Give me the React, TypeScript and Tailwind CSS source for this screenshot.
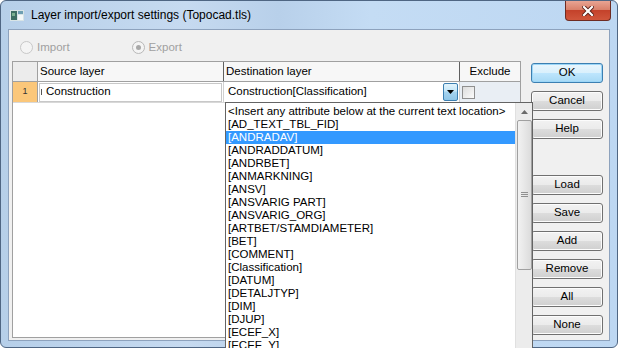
import React from "react";

const items = [
  "<Insert any attribute below at the current text location>",
  "[AD_TEXT_TBL_FID]",
  "[ANDRADAV]",
  "[ANDRADDATUM]",
  "[ANDRBET]",
  "[ANMARKNING]",
  "[ANSV]",
  "[ANSVARIG PART]",
  "[ANSVARIG_ORG]",
  "[ARTBET/STAMDIAMETER]",
  "[BET]",
  "[COMMENT]",
  "[Classification]",
  "[DATUM]",
  "[DETALJTYP]",
  "[DIM]",
  "[DJUP]",
  "[ECEF_X]",
  "[ECEF_Y]",
];

const leftButtons1 = ["OK", "Cancel", "Help"];
const leftButtons2 = ["Load", "Save", "Add", "Remove", "All", "None"];

function Btn({ label, primary }: { label: string; primary?: boolean }) {
  return (
    <div
      className={
        "h-[20px] w-[72px] rounded-[3px] border flex items-center justify-center text-[11.5px] text-black " +
        (primary
          ? "border-[#3c7fb1] bg-[linear-gradient(#eaf6fd_0%,#d9f0fc_50%,#bee6fd_50%,#a7d9f5_100%)] shadow-[inset_0_0_0_1px_#9cd6f7]"
          : "border-[#707070] bg-[linear-gradient(#f2f2f2_0%,#ebebeb_50%,#dddddd_50%,#cfcfcf_100%)] shadow-[inset_0_0_0_1px_#fcfcfc]")
      }
    >
      {label}
    </div>
  );
}

export default function App() {
  return (
    <div
      className="relative w-[618px] h-[348px] overflow-hidden bg-white"
      style={{ fontFamily: '"Liberation Sans", Arial, sans-serif' }}
    >
      <div className="w-[618px] h-[348px] rounded-t-[6px] rounded-b-[6px] border border-[#4f6683] bg-[linear-gradient(90deg,#b6cfe9_0%,#c6daf0_30%,#b8d0ea_45%,#c4dcf4_60%,#bdd7f2_100%)] flex flex-col">
        {/* Title bar */}
        <div className="h-[28px] flex items-start shrink-0">
          <div className="ml-[9px] mt-[9px] w-[14px] h-[11px]">
            <svg width="14" height="11" viewBox="0 0 14 11">
              <rect x="0" y="0" width="14" height="11" fill="#d8e4e6" />
              <rect x="1" y="1" width="6" height="9" fill="#3d6f63" />
              <rect x="8" y="1" width="5" height="3" fill="#6e9fb2" />
              <rect x="8" y="5" width="5" height="5" fill="#f4f8f8" />
              <rect x="2" y="3" width="3" height="3" fill="#7bb18f" />
            </svg>
          </div>
          <div className="ml-[7px] mt-[6px] text-[12px] leading-[16px] text-black">
            Layer import/export settings (Topocad.tls)
          </div>
          <div className="flex-1" />
          <div className="mr-[6px] w-[46px] h-[20px] rounded-b-[4px] border border-[#6e2b22] border-t-0 bg-[linear-gradient(#e8a493_0%,#d9816b_45%,#c4422b_50%,#d0563c_100%)] flex items-center justify-center">
            <svg width="12" height="10" viewBox="0 0 12 10">
              <path d="M2 1 L10 9 M10 1 L2 9" stroke="#5a1f18" strokeWidth="4" strokeLinecap="square" />
              <path d="M2 1 L10 9 M10 1 L2 9" stroke="#ffffff" strokeWidth="2.2" strokeLinecap="square" />
            </svg>
          </div>
        </div>

        {/* Client */}
        <div className="flex-1 mx-[7px] mb-[6px] border border-[#8da2bd] bg-[#f0f0f0] flex">
          <div className="flex flex-col ml-[3px] w-[509px]">
            {/* radio row */}
            <div className="h-[31px] pt-[4px] flex items-center text-[11.5px] text-[#a0a0a0]">
              <div className="ml-[8px] flex items-center">
                <div className="w-[13px] h-[13px] rounded-full border border-[#c8c8c8] bg-[#f4f4f4]" />
                <span className="ml-[4px]">Import</span>
              </div>
              <div className="ml-[62px] flex items-center">
                <div className="w-[13px] h-[13px] rounded-full border border-[#b8b8b8] bg-[#f4f4f4] flex items-center justify-center">
                  <div className="w-[5px] h-[5px] rounded-full bg-[#a8a8a8]" />
                </div>
                <span className="ml-[4px]">Export</span>
              </div>
            </div>

            {/* grid */}
            <div className="flex-1 mb-[2px] border border-[#a0a0a0] bg-white flex flex-col text-[11.5px] text-black">
              <div className="h-[20px] flex border-b border-[#a0a0a0] bg-[#f7f7f7]">
                <div className="w-[25px] bg-[#ececec] border-r border-[#a0a0a0]" />
                <div className="w-[186px] border-r border-[#606060] pl-[2px] flex items-center">Source layer</div>
                <div className="w-[236px] border-r border-[#606060] pl-[2px] flex items-center">Destination layer</div>
                <div className="flex-1 flex items-center justify-center">Exclude</div>
              </div>
              <div className="h-[21px] flex border-b border-[#d8d8d8]">
                <div className="w-[25px] bg-[#fbc77a] border-r border-[#a0a0a0] flex items-center justify-center text-[9px] text-[#333]">
                  1
                </div>
                <div className="w-[186px] border-r border-[#d0d0d0] flex items-center">
                  <div className="ml-[1px] w-[183px] h-[19px] border border-[#c8c8c8] bg-white flex items-center">
                    <span className="ml-[1px] w-[1px] h-[6px] bg-[#555]" />
                    <span className="ml-[4px]">Construction</span>
                  </div>
                </div>
                <div className="w-[236px] border-r border-[#d0d0d0] flex items-center bg-white">
                  <span className="ml-[4px] flex-1">Construction[Classification]</span>
                  <div className="mr-[1px] w-[15px] h-[18px] rounded-[2px] border border-[#3c7fb1] bg-[linear-gradient(#e3f4fc_0%,#c4e6f8_45%,#a5d3ef_50%,#8fc6e8_100%)] flex items-center justify-center">
                    <svg width="7" height="4" viewBox="0 0 7 4">
                      <path d="M0 0 L7 0 L3.5 4 Z" fill="#000" />
                    </svg>
                  </div>
                </div>
                <div className="flex-1 bg-[#e9eef4] flex items-center">
                  <div className="ml-[2px] w-[13px] h-[13px] border border-[#8f8f8f] bg-[linear-gradient(135deg,#dcdcdc,#fbfbfb)]" />
                </div>
              </div>
            </div>
          </div>

          {/* buttons */}
          <div className="ml-[10px] mt-[33px] flex flex-col gap-[8px]">
            {leftButtons1.map((b, i) => (
              <Btn key={b} label={b} primary={i === 0} />
            ))}
            <div className="h-[20px]" />
            {leftButtons2.map((b) => (
              <Btn key={b} label={b} />
            ))}
          </div>
        </div>
      </div>

      {/* dropdown list overlay */}
      <div className="absolute left-[225px] top-[102px] w-[308px] h-[250px] border border-[#646464] bg-white flex text-[11.5px] text-black">
        <div className="flex-1 pt-[2px]">
          {items.map((t, i) => (
            <div
              key={t}
              className={
                "h-[13px] leading-[13px] pl-[2px] whitespace-nowrap " +
                (i === 2 ? "bg-[#3399ff] text-white" : "")
              }
            >
              {t}
            </div>
          ))}
        </div>
        <div className="w-[17px] bg-[#ececec] border-l border-[#e0e0e0] flex flex-col items-center">
          <div className="h-[17px] w-full flex items-center justify-center">
            <svg width="7" height="4" viewBox="0 0 7 4">
              <path d="M0 4 L7 4 L3.5 0 Z" fill="#6a6a6a" />
            </svg>
          </div>
          <div className="w-[15px] h-[150px] rounded-[2px] border border-[#a0a0a0] bg-[linear-gradient(90deg,#f2f2f2,#dcdcdc)] flex items-center justify-center">
            <svg width="7" height="6" viewBox="0 0 7 6">
              <path d="M0 0.5 H7 M0 2.5 H7 M0 4.5 H7" stroke="#909090" strokeWidth="1" />
            </svg>
          </div>
        </div>
      </div>
    </div>
  );
}
